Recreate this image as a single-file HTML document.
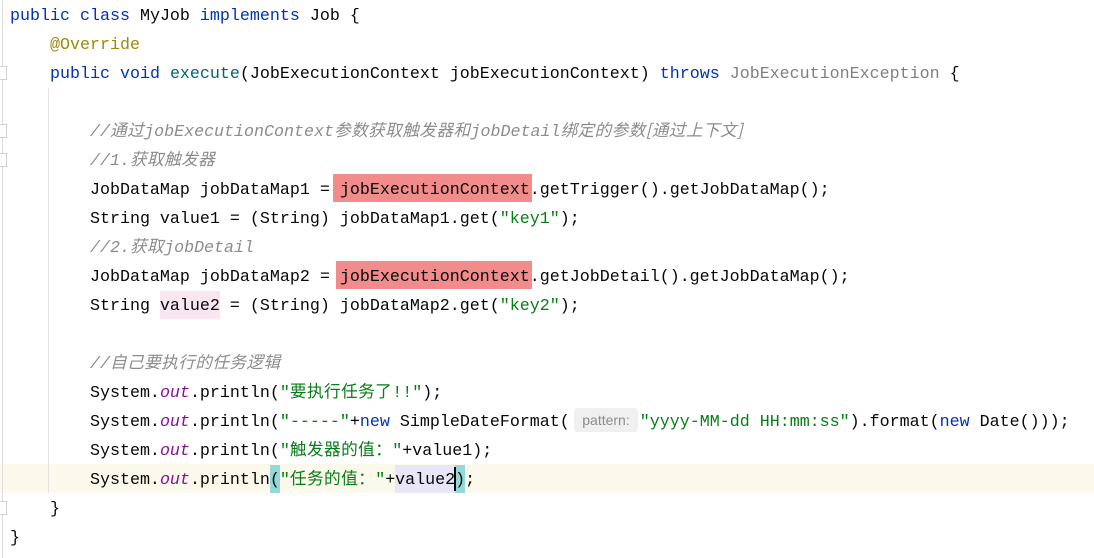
<!DOCTYPE html>
<html><head><meta charset="utf-8"><style>
body{margin:0;width:1094px;height:558px;background:#fff;position:relative;overflow:hidden;font-family:"Liberation Mono","Noto Sans CJK SC",monospace;font-size:16.67px;color:#080808}
.l{position:absolute;left:10px;height:29px;line-height:29px;white-space:pre;margin-top:2px}
.k{color:#0033b3}.m{color:#00627a}.a{color:#9e880d}.s{color:#067d17}.c{color:#8c8c8c;font-style:italic}.o{color:#871094;font-style:italic}.g{color:#808080}
.cj{font-family:"Noto Sans CJK SC",sans-serif;letter-spacing:0.4px;line-height:0}
.hl{position:absolute}
.fold{position:absolute;left:0;width:6px;height:12px;border:1px solid #d0d0d0;border-left:none;background:#fff}
</style></head><body>
<div class="hl" style="left:0;top:464px;width:1094px;height:29px;background:#fbf8ec"></div>
<div class="hl" style="left:2px;top:0;width:1px;height:558px;background:#dcdcdc"></div>
<div class="hl" style="left:48px;top:88px;width:1px;height:405px;background:#e4e4e4"></div>
<div class="fold" style="top:66px"></div><div class="fold" style="top:124px"></div><div class="fold" style="top:153px"></div><div class="fold" style="top:501px"></div>
<div class="hl" style="left:333px;top:174px;width:199px;height:28px;background:#f28c8c"></div>
<div class="hl" style="left:336px;top:261px;width:196px;height:28px;background:#f28c8c"></div>
<div class="hl" style="left:160px;top:291px;width:60px;height:28px;background:#fae6f0"></div>
<div class="hl" style="left:270px;top:465px;width:10px;height:28px;background:#93d9d9"></div>
<div class="hl" style="left:455px;top:465px;width:10px;height:28px;background:#93d9d9"></div>
<div class="hl" style="left:395px;top:465px;width:60px;height:28px;background:#e8e6f8"></div>
<div class="hl" style="left:454px;top:467px;width:2px;height:24px;background:#000"></div>
<div class="hl" style="left:574px;top:408px;width:64px;height:24px;background:#f0f0f0;border-radius:3px;font-family:'Liberation Sans',sans-serif;font-size:14px;color:#8c8c8c;line-height:24px;text-align:center">pattern:</div>

<div class="l" style="top:0"><span class="k">public class</span> MyJob <span class="k">implements</span> Job {</div>
<div class="l" style="top:29px">    <span class="a">@Override</span></div>
<div class="l" style="top:58px">    <span class="k">public void</span> <span class="m">execute</span>(JobExecutionContext jobExecutionContext) <span class="k">throws</span> <span class="g">JobExecutionException</span> {</div>
<div class="l" style="top:116px"><span class="c">        //<span class="cj">通过</span>jobExecutionContext<span class="cj">参数获取触发器和</span>jobDetail<span class="cj">绑定的参数[通过上下文]</span></span></div>
<div class="l" style="top:145px"><span class="c">        //1.<span class="cj">获取触发器</span></span></div>
<div class="l" style="top:174px">        JobDataMap jobDataMap1 = jobExecutionContext.getTrigger().getJobDataMap();</div>
<div class="l" style="top:203px">        String value1 = (String) jobDataMap1.get(<span class="s">"key1"</span>);</div>
<div class="l" style="top:232px"><span class="c">        //2.<span class="cj">获取</span>jobDetail</span></div>
<div class="l" style="top:261px">        JobDataMap jobDataMap2 = jobExecutionContext.getJobDetail().getJobDataMap();</div>
<div class="l" style="top:290px">        String value2 = (String) jobDataMap2.get(<span class="s">"key2"</span>);</div>
<div class="l" style="top:348px"><span class="c">        //<span class="cj">自己要执行的任务逻辑</span></span></div>
<div class="l" style="top:377px">        System.<span class="o">out</span>.println(<span class="s">"<span class="cj">要执行任务了</span>!!"</span>);</div>
<div class="l" style="top:406px">        System.<span class="o">out</span>.println(<span class="s">"-----"</span>+<span class="k">new</span> SimpleDateFormat(       <span class="s">"yyyy-MM-dd HH:mm:ss"</span>).format(<span class="k">new</span> Date()));</div>
<div class="l" style="top:435px">        System.<span class="o">out</span>.println(<span class="s">"<span class="cj">触发器的值：</span>"</span>+value1);</div>
<div class="l" style="top:464px">        System.<span class="o">out</span>.println(<span class="s">"<span class="cj">任务的值：</span>"</span>+value2);</div>
<div class="l" style="top:493px">    }</div>
<div class="l" style="top:522px">}</div>
</body></html>
